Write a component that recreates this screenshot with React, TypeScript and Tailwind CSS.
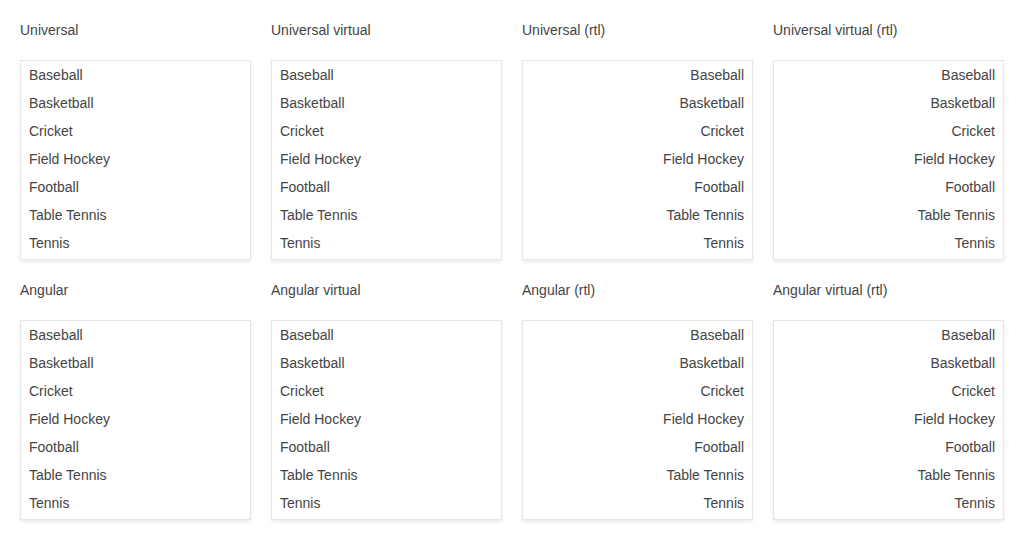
const SPORTS = ['Baseball', 'Basketball', 'Cricket', 'Field Hockey', 'Football', 'Table Tennis', 'Tennis']

const SECTIONS = [
  ['Universal', 'Universal virtual', 'Universal (rtl)', 'Universal virtual (rtl)'],
  ['Angular', 'Angular virtual', 'Angular (rtl)', 'Angular virtual (rtl)'],
]

function ListBox({ title, rtl }: { title: string; rtl: boolean }) {
  return (
    <div className="flex flex-col">
      <h3 className="mb-5 h-5 text-[14px] leading-5 text-[#444]">{title}</h3>
      <div
        dir={rtl ? 'rtl' : 'ltr'}
        className="h-[200px] border border-[#e6e6e6] bg-white shadow-[0_2px_3px_rgba(0,0,0,0.08)]"
      >
        {SPORTS.map((s) => (
          <div key={s} className="h-7 px-2 text-[14px] leading-7 text-[#444]">
            {s}
          </div>
        ))}
      </div>
    </div>
  )
}

export default function App() {
  return (
    <main className="min-h-screen bg-white px-5 pt-5 font-['Liberation_Sans',Arial,sans-serif]">
      <div className="flex flex-col gap-5">
        {SECTIONS.map((row, i) => (
          <div key={i} className="grid grid-cols-4 gap-5">
            {row.map((t) => (
              <ListBox key={t} title={t} rtl={t.includes('rtl')} />
            ))}
          </div>
        ))}
      </div>
    </main>
  )
}
